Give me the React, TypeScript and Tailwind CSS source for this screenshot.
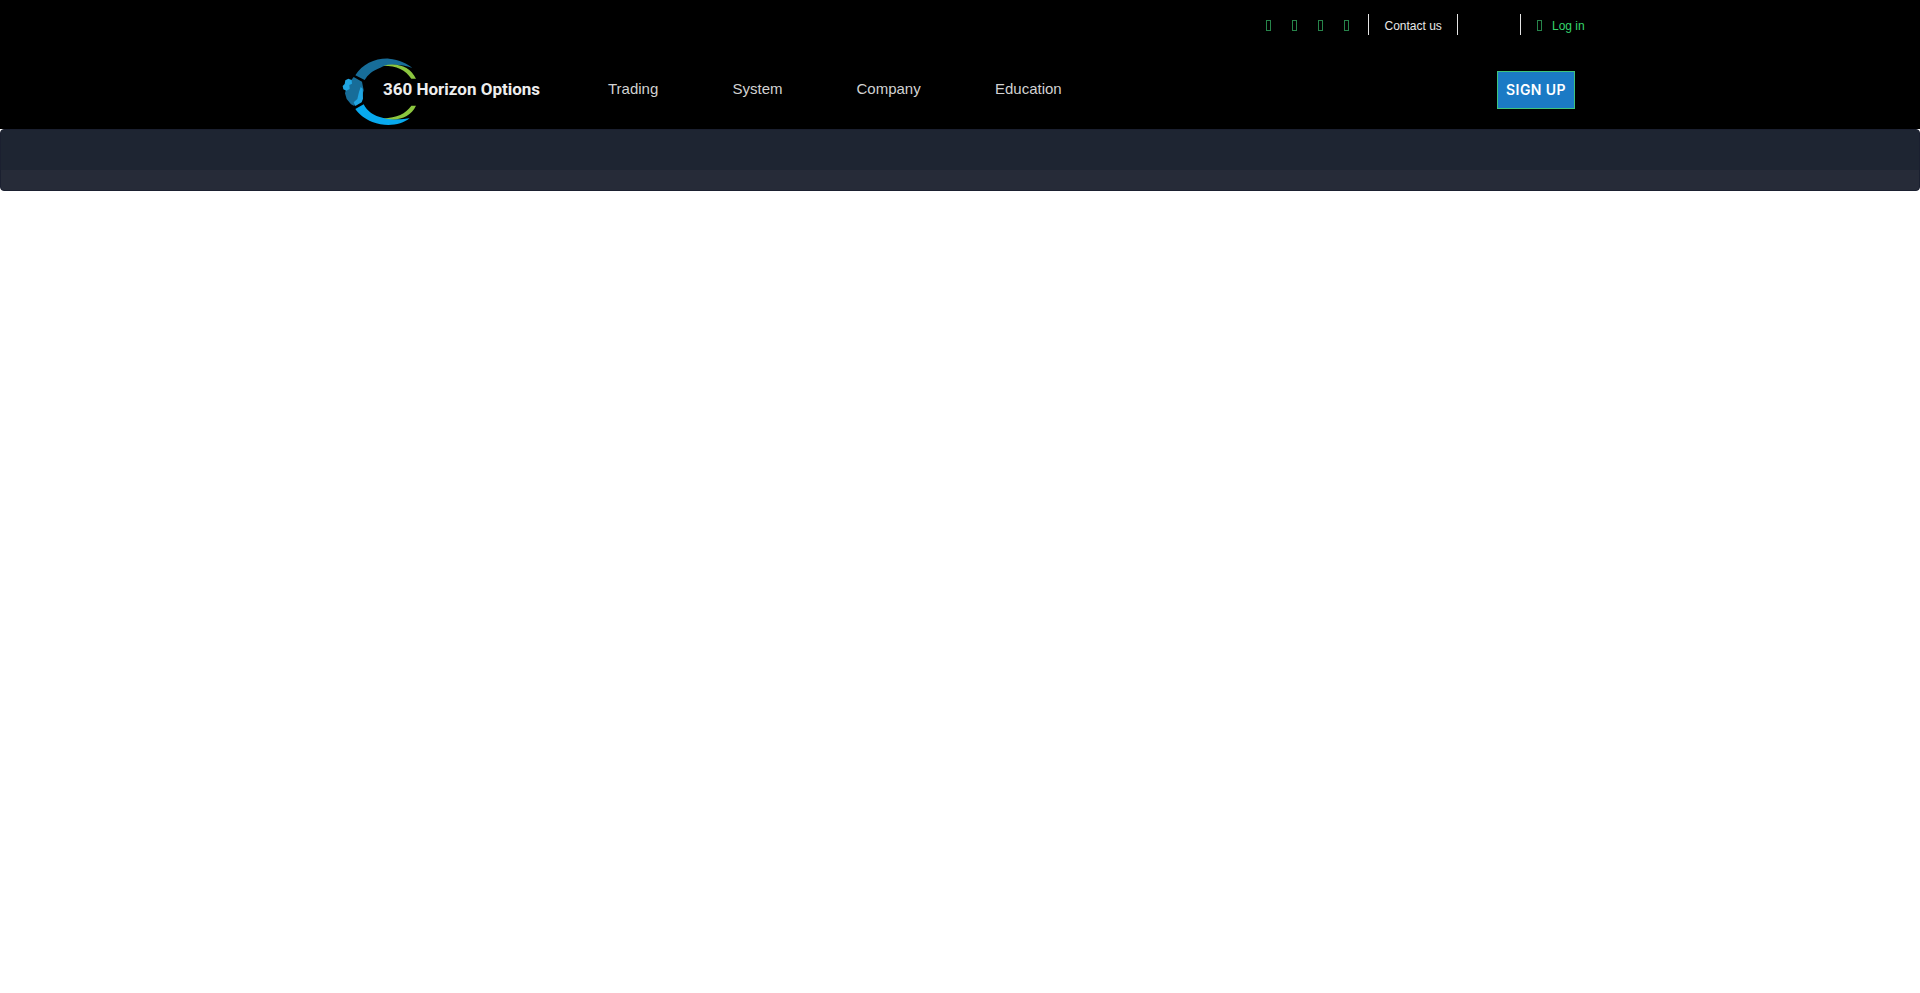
import React from "react";

const NAV = [
  { label: "Trading", width: "w-[124.5px]" },
  { label: "System", width: "w-[124px]" },
  { label: "Company", width: "w-[138.5px]" },
  { label: "Education", width: "w-[80px]" },
];

function Glyph() {
  return <span className="block h-[11px] w-[5px] border border-[#27844a]" />;
}

function Logo() {
  return (
    <a href="#" className="flex h-[80px] w-[210px] items-center">
      <svg viewBox="0 0 330 240" className="h-[80px] w-[110px] shrink-0">
        <path fill="#176d99" d="M61 76C82 42 122 24 162 26C193 29 218 41 232 54C200 43 160 40 136 53C112 62 98 74 89 90Z" />
        <path fill="#8cc63f" d="M145 47C187 36 226 50 243 86L229 86C212 60 185 47 145 47Z" />
        <path fill="#08a9ee" d="M61 177L86 163C96 184 116 198 145 204C175 210 205 208 224 205C198 226 153 232 112 216C88 206 72 193 61 177Z" />
        <path fill="#8cc63f" d="M145 204C185 204 212 191 229 167L243 167C226 202 187 216 145 204Z" />
        <path fill="#176d99" d="M56 81L81 95L86 121L79 148L62 158L58 168L48 163L35 147L30 130L36 106L49 90Z" />
        <path fill="#20a5e2" d="M31 91L40 86L50 90L51 101L43 105L44 117L34 122L25 118L23 108L29 102ZM72 126L77 111L83 116L84 146L80 157L61 168L56 157L67 147Z" />
      </svg>
      <span className="-ml-[62px] -mt-[2px] whitespace-nowrap font-['Roboto'] text-[17px] font-bold leading-none text-[#eeeeee]">360 Horizon Options</span>
    </a>
  );
}

export default function App() {
  return (
    <div className="min-h-[993px] bg-white font-['Liberation_Sans',sans-serif]">
      <header className="h-[129px] bg-black">
        <div className="flex h-[50px] items-start pl-[1266px] pt-[14px] text-[12px] leading-[24px]">
          <div className="flex h-[23px] w-[102px] items-center gap-[21px]">
            <Glyph /><Glyph /><Glyph /><Glyph />
          </div>
          <a href="#" className="h-[21px] w-[90px] border-x border-[#e5e5e5] pl-[15.5px] text-[#e8e8e8]">Contact us</a>
          <div className="h-[21px] w-[63px] border-r border-[#e5e5e5]" />
          <a href="#" className="ml-4 flex h-[23px] items-center gap-[10px] text-[#35d56b]">
            <Glyph /><span className="pt-px">Log in</span>
          </a>
        </div>
        <div className="flex h-[79px] items-start pl-[335px]">
          <Logo />
          <nav className="ml-[63px] flex pt-[27px] text-[15px] leading-[24px] text-[#d2d2d2]">
            {NAV.map((item) => (
              <a key={item.label} href="#" className={item.width}>{item.label}</a>
            ))}
          </nav>
          <button className="ml-[422px] mt-[21px] h-[38px] w-[78px] whitespace-nowrap border border-[#3fc47c] bg-[#1b7ac5] font-['Inter'] text-[14px] font-semibold leading-none tracking-[0.4px] text-white">SIGN UP</button>
        </div>
      </header>
      <section className="h-[62px] overflow-hidden rounded-[4px] border border-[#1b2030] bg-[#262b38]">
        <div className="h-[40px] bg-[#1e2532]" />
      </section>
    </div>
  );
}
